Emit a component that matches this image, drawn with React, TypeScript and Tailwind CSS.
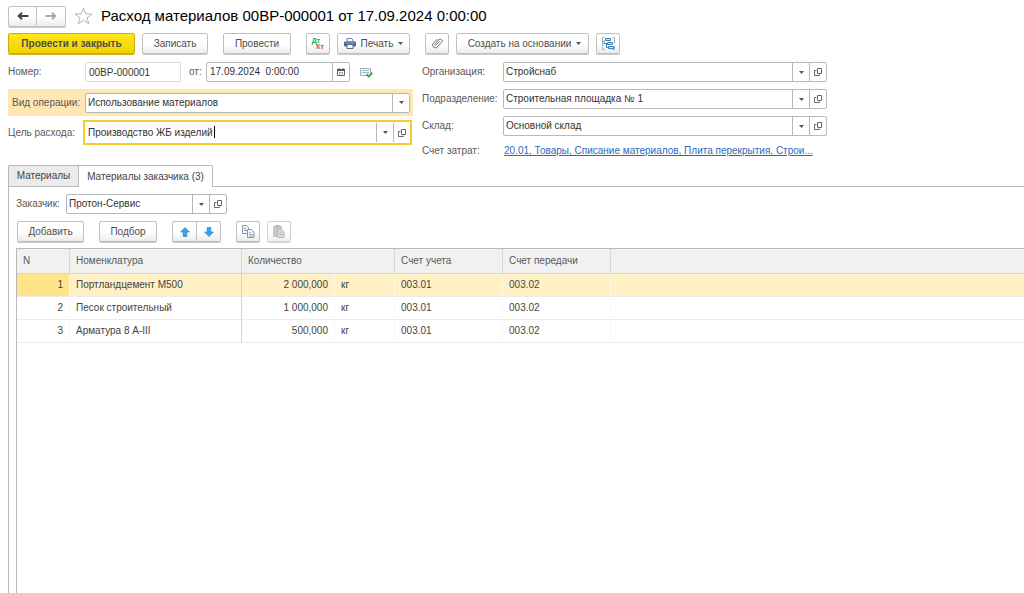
import clsx from "clsx";
import { ReactNode, useState } from "react";

interface MaterialRow {
	id: number;
	name: string;
	quantity: string;
	unit: string;
	account: string;
	transferAccount: string;
}

const rows: MaterialRow[] = [
	{ id: 1, name: "Портландцемент М500", quantity: "2 000,000", unit: "кг", account: "003.01", transferAccount: "003.02" },
	{ id: 2, name: "Песок строительный", quantity: "1 000,000", unit: "кг", account: "003.01", transferAccount: "003.02" },
	{ id: 3, name: "Арматура 8 A-III", quantity: "500,000", unit: "кг", account: "003.01", transferAccount: "003.02" },
];

const buttonBase =
	"flex h-[21px] shrink-0 items-center justify-center rounded-xs border border-[#c0c0c0] bg-linear-to-b from-white from-50% to-[#ececec] text-[#4d4d4d] shadow-[0_1px_0_#c8c8c8]";

/* ---------- Icons ---------- */

function CaretIcon() {
	return (
		<svg width="5" height="3" viewBox="0 0 5 3" fill="#555">
			<path d="M0 0h5L2.5 3z" />
		</svg>
	);
}

function OpenIcon() {
	return (
		<svg width="9" height="8" viewBox="0 0 9 8" fill="none" stroke="#666">
			<path d="M3.5 .5h4v5h-4z" />
			<path d="M2.500 2.500h-2v5h5V6.500" />
		</svg>
	);
}

function ArrowIcon({ color, flip }: { color: string; flip?: boolean }) {
	return (
		<svg width="12" height="8" viewBox="0 0 12 8" fill="none" stroke={color} strokeWidth="2" className={clsx(flip && "rotate-180")}>
			<path d="M11.5 4H2M5 .8 1.7 4 5 7.2" />
		</svg>
	);
}

function BlueArrowIcon({ down }: { down?: boolean }) {
	return (
		<svg width="10" height="10" viewBox="0 0 10 10" fill="#3aa5ea" stroke="#2e84bf" strokeWidth=".7" className={clsx(down && "rotate-180")}>
			<path d="M5 .5 9.4 5H6.8v4.5H3.2V5H.6z" strokeLinejoin="round" />
		</svg>
	);
}

function PrinterIcon() {
	return (
		<svg width="12" height="11" viewBox="0 0 12 11">
			<path d="M3 .5h4.5L9 2v2H3z" fill="#fff" stroke="#6885a3" />
			<rect y="3.5" width="12" height="5" rx="1" fill="#416d99" />
			<path d="M1.5 5h9" stroke="#86a8c8" />
			<path d="M3 6.5h6v4H3z" fill="#fff" stroke="#48698c" />
		</svg>
	);
}

function ClipIcon() {
	return (
		<svg width="11" height="11" viewBox="0 0 11 11" fill="none" stroke="#707070" strokeLinecap="round">
			<path d="M7.300 3.700 4.200 6.900a.8.8 0 0 1-1.200-1.100L6.900 1.700a1.900 1.900 0 0 1 2.800 2.700L5.300 9a2.700 2.700 0 0 1-3.900-3.800L5.200 1.300" />
		</svg>
	);
}

function StructureIcon() {
	return (
		<svg width="13" height="13" viewBox="0 0 13 13" fill="none" stroke="#3f7fae">
			<path d="M2.500 .5H.5v8h1M10.500 .5h2v6M.5 10v2.500H3M10 12.500h2.500V9" stroke="#8eb4cf" />
			<path d="M3.500 1.500h5v2h-5zM5.500 5.500h5v2h-5zM6.500 9.500h5v2h-5z" fill="#d5e6f2" />
			<path d="M2 3.500v3h3.500M4.500 7v3.500h2" />
		</svg>
	);
}

function CalendarIcon() {
	return (
		<svg width="8" height="8" viewBox="0 0 8 8">
			<path d="M.5 1.500h7v6h-7z" fill="#fff" stroke="#666" />
			<path d="M0 1h8v2H0zM1.500 0h1v1h-1zM5.500 0h1v1h-1z" fill="#555" />
			<path d="M2 4.500h4M2 6h4" stroke="#888" strokeDasharray="1 .5" />
		</svg>
	);
}

function PostedIcon() {
	return (
		<svg width="13" height="11" viewBox="0 0 13 11" fill="none">
			<path d="M.5 1.500h10v7H.5z" fill="#f3f7fa" stroke="#a1b0bd" />
			<path d="M2 3.500h7M2 5.500h7" stroke="#a3b7c7" />
			<path d="M6.500 7.300 8.700 9.500 12.300 5.800" stroke="#38b549" strokeWidth="2" />
		</svg>
	);
}

function CopyIcon() {
	return (
		<svg width="13" height="13" viewBox="0 0 13 13" fill="#f4f7fa" stroke="#8496a8">
			<path d="M.5 .5h4l2 2v6h-6z" />
			<path d="M2 3.500h2M2 5.500h3" />
			<path d="M5.500 4.500h4l2.500 2.500v5.500H5.500z" />
			<path d="M7 7.500h2M7 9.500h4M7 11h4" stroke="#9badbd" />
		</svg>
	);
}

function PasteIcon() {
	return (
		<svg width="12" height="13" viewBox="0 0 12 13">
			<path d="M0 1h9v11H0z" fill="#b0b0b0" />
			<path d="M2.500 0h4v2.500h-4z" fill="#969696" />
			<path d="M4.500 4.500h4L11 7v5.500H4.500z" fill="#c8c8c8" stroke="#a0a0a0" />
			<path d="M6 7.500h3M6 9.500h4" stroke="#aaa" />
		</svg>
	);
}

/* ---------- Form fields ---------- */

interface FieldProps {
	id: string;
	value: string;
	openable?: boolean;
	active?: boolean;
}

function ComboField({ id, value, openable = true, active }: FieldProps) {
	return (
		<div
			className={clsx(
				"relative flex min-w-0 flex-1 bg-white",
				active ? "h-[25px] border-2 border-[#fccb2b] py-px pl-px" : "h-5 rounded-xs border border-[#b8b8b8]"
			)}
		>
			<input id={id} defaultValue={value} className="min-w-0 flex-1 px-[2px] text-[#333] outline-none" />
			{/* Text cursor of the field being edited */}
			{active && <span className="absolute top-1 left-[129px] h-3 w-px bg-black" />}
			<button aria-label="Выбрать" className="flex w-[17px] items-center justify-center border-l border-[#b8b8b8]">
				<CaretIcon />
			</button>
			{openable && (
				<button aria-label="Открыть" className="flex w-[17px] items-center justify-center border-l border-[#b8b8b8]">
					<OpenIcon />
				</button>
			)}
		</div>
	);
}

function FormRow({ id, label, children }: { id: string; label: string; children: ReactNode }) {
	return (
		<div className="flex h-5 items-center">
			<label htmlFor={id} className="w-[81px] shrink-0 whitespace-nowrap">
				{label}
			</label>
			{children}
		</div>
	);
}

export default function App() {
	const [selectedId, setSelectedId] = useState(1);

	return (
		<div className="flex min-h-screen flex-col overflow-x-hidden bg-white pl-2 font-['Liberation_Sans',Arial,sans-serif] text-[10px] leading-3 text-[#595959]">
			{/* Title */}
			<header className="flex h-8 items-center">
				<div className="flex">
					<button aria-label="Назад" className={clsx(buttonBase, "w-[29px] rounded-r-none")}>
						<ArrowIcon color="#444" />
					</button>
					<button aria-label="Вперед" className={clsx(buttonBase, "w-[29px] rounded-l-none border-l-0")}>
						<ArrowIcon color="#aaa" flip />
					</button>
				</div>
				<button aria-label="В избранное" className="ml-2 w-[27px] text-[#b5b5b5]">
					<svg width="19" height="18" viewBox="0 0 19 18" fill="none" stroke="currentColor">
						<path d="m9.500 1 2.200 5.800 6.300.2-5 3.800 1.800 6-5.300-3.500-5.300 3.500 1.800-6L1 7l6.300-.2z" />
					</svg>
				</button>
				<h1 className="text-[15px] leading-5 text-black">Расход материалов 00ВР-000001 от 17.09.2024 0:00:00</h1>
			</header>

			{/* Command bar */}
			<div className="flex flex-wrap gap-[15px] pt-px">
				<div className="flex gap-[7px]">
					<button className="h-[21px] w-[127px] rounded-xs border border-[#c9ae10] bg-linear-to-b from-[#ffe71a] to-[#f2d000] font-bold text-[#4d4d4d] shadow-[0_1px_0_#c8b22a]">
						Провести и закрыть
					</button>
					<button className={clsx(buttonBase, "w-[66px]")}>Записать</button>
				</div>
				<button className={clsx(buttonBase, "w-[68px]")}>Провести</button>
				<div className="flex gap-[7px]">
					<button aria-label="Дт Кт" className={clsx(buttonBase, "w-6")}>
						<span className="flex flex-col text-[7px] leading-[6px] font-bold">
							<span className="pr-1 text-[#2ca24c]">Дт</span>
							<span className="pl-1 text-[#e34b4b]">Кт</span>
						</span>
					</button>
					<button className={clsx(buttonBase, "w-[73px] gap-[5px]")}>
						<PrinterIcon />
						Печать
						<CaretIcon />
					</button>
				</div>
				<div className="flex gap-[7px]">
					<button aria-label="Файлы" className={clsx(buttonBase, "w-6")}>
						<ClipIcon />
					</button>
					<button className={clsx(buttonBase, "w-[133px] gap-[5px] pl-1")}>
						Создать на основании
						<CaretIcon />
					</button>
					<button aria-label="Структура" className={clsx(buttonBase, "w-6")}>
						<StructureIcon />
					</button>
				</div>
			</div>

			{/* Document fields */}
			<div className="mt-2 grid w-full max-w-[819px] grid-cols-2 gap-[9px]">
				<div>
					<div className="flex h-5 items-center">
						<label htmlFor="number" className="w-[77px] shrink-0">
							Номер:
						</label>
						<input id="number" defaultValue="00ВР-000001" className="h-5 w-24 rounded-xs border border-[#ddd] px-[3px] text-[#333]" />
						<label htmlFor="date" className="ml-2 w-[17px]">
							от:
						</label>
						<div className="flex h-5 w-36 rounded-xs border border-[#b8b8b8]">
							<input id="date" defaultValue="17.09.2024  0:00:00" className="min-w-0 flex-1 px-[3px] text-[#333] outline-none" />
							<button aria-label="Календарь" className="flex w-[17px] items-center justify-center border-l border-[#b8b8b8]">
								<CalendarIcon />
							</button>
						</div>
						<span className="ml-[10px]">
							<PostedIcon />
						</span>
					</div>
					<div className="mt-[7px] flex h-[27px] items-center bg-[#ffe7b3] pr-[3px] pl-1">
						<label htmlFor="operation" className="w-[73px] shrink-0 whitespace-nowrap">
							Вид операции:
						</label>
						<ComboField id="operation" value="Использование материалов" openable={false} />
					</div>
					<div className="mt-1 flex items-center pr-px">
						<label htmlFor="purpose" className="w-[75px] shrink-0 whitespace-nowrap">
							Цель расхода:
						</label>
						<ComboField id="purpose" value="Производство ЖБ изделий" active />
					</div>
				</div>
				<div className="flex flex-col gap-[7px]">
					<FormRow id="organization" label="Организация:">
						<ComboField id="organization" value="Стройснаб" />
					</FormRow>
					<FormRow id="department" label="Подразделение:">
						<ComboField id="department" value="Строительная площадка № 1" />
					</FormRow>
					<FormRow id="warehouse" label="Склад:">
						<ComboField id="warehouse" value="Основной склад" />
					</FormRow>
					<div className="flex items-center pt-[2px]">
						<span className="w-[82px] shrink-0">Счет затрат:</span>
						<a href="#" className="whitespace-nowrap text-[#2f68b8] underline">
							20.01, Товары, Списание материалов, Плита перекрытия, Строи...
						</a>
					</div>
				</div>
			</div>

			{/* Tabs */}
			<div role="tablist" className="mt-2 flex">
				<button role="tab" aria-selected="false" className="h-[22px] w-[70px] rounded-tl-xs border border-r-0 border-[#b8b8b8] bg-[#ebebeb] text-[#444]">
					Материалы
				</button>
				<button role="tab" aria-selected="true" className="h-[22px] w-[135px] rounded-tr-xs border border-b-0 border-[#b8b8b8] text-[#444]">
					Материалы заказчика (3)
				</button>
				<div className="flex-1 border-b border-[#b8b8b8]" />
			</div>

			<div role="tabpanel" className="flex flex-1 flex-col border-l border-[#b8b8b8] pt-[7px] pl-[7px]">
				<div className="flex items-center">
					<label htmlFor="customer" className="w-[50px]">
						Заказчик:
					</label>
					<div className="flex w-[161px]">
						<ComboField id="customer" value="Протон-Сервис" />
					</div>
				</div>

				<div className="mt-[7px] flex gap-[15px] pl-px">
					<button className={clsx(buttonBase, "w-[67px]")}>Добавить</button>
					<button className={clsx(buttonBase, "w-[58px]")}>Подбор</button>
					<div className="flex">
						<button aria-label="Вверх" className={clsx(buttonBase, "w-[25px] rounded-r-none")}>
							<BlueArrowIcon />
						</button>
						<button aria-label="Вниз" className={clsx(buttonBase, "w-6 rounded-l-none border-l-0")}>
							<BlueArrowIcon down />
						</button>
					</div>
					<div className="flex gap-[7px]">
						<button aria-label="Копировать" className={clsx(buttonBase, "w-6")}>
							<CopyIcon />
						</button>
						<button aria-label="Вставить" className={clsx(buttonBase, "w-6 opacity-70")}>
							<PasteIcon />
						</button>
					</div>
				</div>

				{/* Materials table */}
				<div className="mt-[6px] flex-1 border-t border-l border-[#b8b8b8]">
					<table className="w-full table-fixed border-separate border-spacing-0 text-left">
						<colgroup>
							<col className="w-[53px]" />
							<col className="w-[172px]" />
							<col className="w-[93px]" />
							<col className="w-[60px]" />
							<col className="w-[108px]" />
							<col className="w-[108px]" />
							<col />
						</colgroup>
						<thead>
							<tr className="h-[25px] bg-[#f1f1f1] *:border-b *:border-[#d6d6d6] *:px-[6px] *:font-normal *:not-last:border-r">
								<th>N</th>
								<th>Номенклатура</th>
								<th colSpan={2}>Количество</th>
								<th>Счет учета</th>
								<th>Счет передачи</th>
								<th aria-label="Пусто" />
							</tr>
						</thead>
						<tbody className="text-[#444]">
							{rows.map((row) => {
								const selected = row.id === selectedId;
								const divider = clsx("border-r", selected ? "border-r-[#fff8e2]!" : "border-r-[#f8f8f8]!");
								return (
									<tr
										key={row.id}
										onClick={() => setSelectedId(row.id)}
										className={clsx(
											"h-[23px] *:border-b *:border-[#ebebeb] *:px-[6px]",
											selected && "bg-[#fff1c5]"
										)}
									>
										<td className={clsx("text-right", divider, selected && "bg-[#ffe48a]")}>{row.id}</td>
										<td className="border-r border-r-[#d0d0d0]!">{row.name}</td>
										<td className={clsx("text-right", divider)}>{row.quantity}</td>
										<td className={divider}>{row.unit}</td>
										<td className={divider}>{row.account}</td>
										<td className={divider}>{row.transferAccount}</td>
										<td />
									</tr>
								);
							})}
						</tbody>
					</table>
				</div>
			</div>
		</div>
	);
}
